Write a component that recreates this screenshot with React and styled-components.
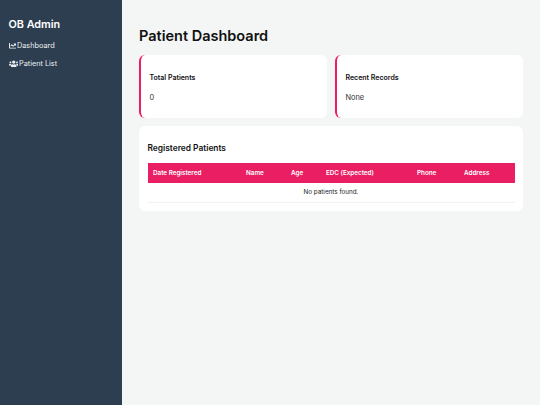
import styled, { createGlobalStyle } from 'styled-components'
import { FaChartLine, FaUsers } from 'react-icons/fa'

const Global = createGlobalStyle`
  html, body {
    margin: 0;
    height: 100%;
    background: #f4f6f6;
    font-family: Inter, "Liberation Sans", sans-serif;
  }
  * { box-sizing: border-box; }
`

const Page = styled.div`
  display: flex;
  height: 405px;
  overflow: hidden;
`

const Sidebar = styled.aside`
  width: 122px;
  flex: none;
  background: #2c3e50;
  color: #fff;
  padding: 17px 8.5px;
`

const Brand = styled.h1`
  margin: 0 0 5px;
  font-size: 10.8px;
  line-height: 15px;
  font-weight: 600;
`

const NavLink = styled.a`
  display: flex;
  align-items: center;
  gap: 1px;
  height: 17.5px;
  font-size: 7.3px;
  color: #ecf0f1;

  svg {
    flex: none;
    height: 7.5px;
    width: ${(p) => p.$iconWidth}px;
  }
`

const Main = styled.main`
  flex: 1;
  padding: 27px 17px 0;
`

const Title = styled.h2`
  margin: 0 0 11px;
  font-size: 14.5px;
  line-height: 17px;
  font-weight: 600;
  color: #111;
`

const Stats = styled.div`
  display: grid;
  grid-template-columns: 1fr 1fr;
  gap: 8px;
`

const StatCard = styled.section`
  height: 63px;
  padding: 18px 8.5px;
  background: #fff;
  border-left: 2.5px solid #e91e63;
  border-radius: 6px;
`

const StatLabel = styled.h3`
  margin: 0 0 11px;
  font-size: 7px;
  line-height: 9px;
  font-weight: 600;
  color: #111;
`

const StatValue = styled.p`
  margin: 0;
  font-size: 7.4px;
  line-height: 9px;
  color: #333;
`

const TableCard = styled.section`
  height: 85px;
  margin-top: 8px;
  padding: 16px 8.5px 0;
  background: #fff;
  border-radius: 6px;
`

const TableTitle = styled.h3`
  margin: 0 0 9px;
  font-size: 8.4px;
  line-height: 12px;
  font-weight: 600;
  color: #111;
`

const Table = styled.table`
  width: 367px;
  border-collapse: collapse;
  table-layout: fixed;
  font-size: 6.3px;
`

const HeadCell = styled.th`
  width: ${(p) => p.$width}px;
  height: 20px;
  padding: 0 4.5px 0 5.5px;
  background: #e91e63;
  color: #fff;
  font-weight: 600;
  text-align: left;
  white-space: nowrap;
`

const EmptyCell = styled.td`
  height: 19px;
  text-align: center;
  color: #222;
  border-bottom: 1px solid #f2f2f2;
`

const columns = [
  ['Date Registered', 93],
  ['Name', 45],
  ['Age', 35],
  ['EDC (Expected)', 91],
  ['Phone', 47],
  ['Address', 56],
]

export default function App() {
  return (
    <Page>
      <Global />
      <Sidebar>
        <Brand>OB Admin</Brand>
        <NavLink $iconWidth={7.5}><FaChartLine /> Dashboard</NavLink>
        <NavLink $iconWidth={9.5}><FaUsers /> Patient List</NavLink>
      </Sidebar>
      <Main>
        <Title>Patient Dashboard</Title>
        <Stats>
          <StatCard>
            <StatLabel>Total Patients</StatLabel>
            <StatValue>0</StatValue>
          </StatCard>
          <StatCard>
            <StatLabel>Recent Records</StatLabel>
            <StatValue>None</StatValue>
          </StatCard>
        </Stats>
        <TableCard>
          <TableTitle>Registered Patients</TableTitle>
          <Table>
            <thead>
              <tr>
                {columns.map(([label, width]) => (
                  <HeadCell key={label} $width={width}>{label}</HeadCell>
                ))}
              </tr>
            </thead>
            <tbody>
              <tr>
                <EmptyCell colSpan={6}>No patients found.</EmptyCell>
              </tr>
            </tbody>
          </Table>
        </TableCard>
      </Main>
    </Page>
  )
}
